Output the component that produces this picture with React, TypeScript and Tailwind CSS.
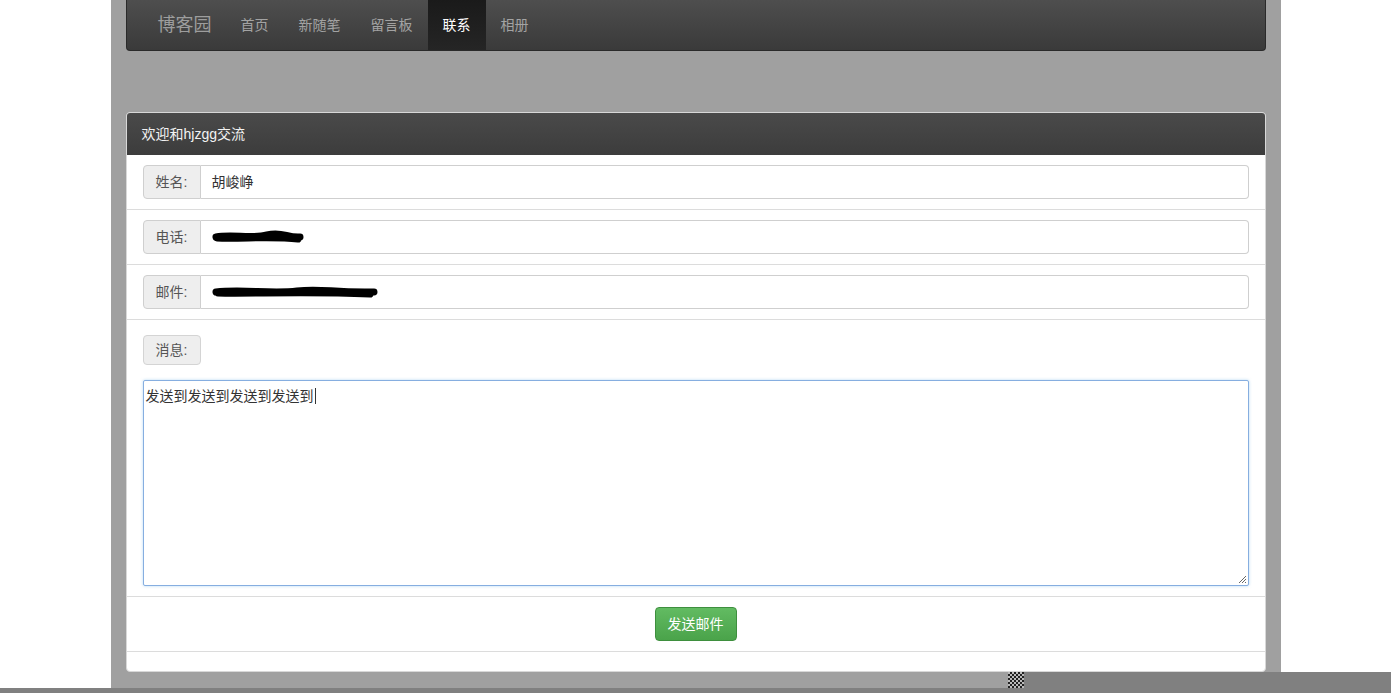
import React from "react";

const font = { fontFamily: '"Liberation Sans", "Noto Sans CJK SC", Arial, sans-serif' };

function Scribble({ width, variant }: { width: number; variant: number }) {
  const d =
    variant === 0
      ? `M4 7 C 20 4, 40 9, 55 5 S 75 8, ${width - 4} 7 M5 8 C 30 9, 60 6, ${width - 6} 9`
      : `M4 7 C 30 4, 60 9, 85 6 S 120 8, ${width - 4} 7 M6 8 C 40 9, 90 6, ${width - 8} 9`;
  return (
    <svg width={width} height={14} viewBox={`0 0 ${width} 14`} className="block">
      <path d={d} stroke="#000" strokeWidth={7} strokeLinecap="round" fill="none" />
    </svg>
  );
}

function Row({ label, children }: { label: string; children: React.ReactNode }) {
  return (
    <div className="border-t border-[#dcdcdc] px-[16px] py-[10px]">
      <div className="flex h-[34px]">
        <div className="flex w-[58px] items-center justify-center rounded-l-[4px] border border-[#cfcfcf] bg-[#eeeeee] text-[14px] text-[#555]">
          {label}
        </div>
        <div className="flex flex-1 items-center rounded-r-[4px] border border-l-0 border-[#cfcfcf] bg-white pl-[11px] text-[14px] text-[#333]">
          {children}
        </div>
      </div>
    </div>
  );
}

export default function App() {
  return (
    <div className="relative h-[693px] w-[1391px] overflow-hidden bg-white" style={font}>
      <div className="mx-auto h-full w-[1170px] bg-[#a0a0a0] px-[15px]">
        {/* navbar */}
        <div className="flex h-[51px] items-stretch rounded-b-[4px] border border-t-0 border-[#2a2a2a] bg-gradient-to-b from-[#4e4e4e] to-[#3a3a3a] pt-[1px]">
          <div className="flex items-center pl-[31px] pr-[13px] text-[18px] text-[#9d9d9d]">博客园</div>
          <div className="w-px" />
          {["首页", "新随笔", "留言板", "联系", "相册"].map((t) => (
            <div
              key={t}
              className={
                t === "联系"
                  ? "-mt-[1px] flex items-center bg-gradient-to-b from-[#1a1a1a] to-[#252525] px-[15px] pt-[1px] text-[14px] text-white"
                  : "flex items-center px-[15px] text-[14px] text-[#a3a3a3]"
              }
            >
              {t}
            </div>
          ))}
        </div>

        {/* panel */}
        <div className="mt-[61px] h-[560px] rounded-[4px] border border-[#d8d8d8] bg-white">
          <div className="flex h-[42px] items-center rounded-t-[3px] bg-gradient-to-b from-[#4a4a4a] to-[#3c3c3c] px-[15px] text-[14px] text-[#f2f2f2]">
            欢迎和hjzgg交流
          </div>
          <div>
            <div className="px-[16px] py-[10px]">
              <div className="flex h-[34px]">
                <div className="flex w-[58px] items-center justify-center rounded-l-[4px] border border-[#cfcfcf] bg-[#eeeeee] text-[14px] text-[#555]">
                  姓名:
                </div>
                <div className="flex flex-1 items-center rounded-r-[4px] border border-l-0 border-[#cfcfcf] bg-white pl-[11px] text-[14px] text-[#333]">
                  胡峻峥
                </div>
              </div>
            </div>
            <Row label="电话:">
              <Scribble width={92} variant={0} />
            </Row>
            <Row label="邮件:">
              <Scribble width={166} variant={1} />
            </Row>
            <div className="border-t border-[#dcdcdc] px-[16px] pb-[10px] pt-[15px]">
              <div className="flex h-[30px] w-[58px] items-center justify-center rounded-[4px] border border-[#d4d4d4] bg-[#eeeeee] text-[14px] text-[#555]">
                消息:
              </div>
              <div className="relative mt-[15px] h-[206px] rounded-[2px] border border-[#86aee0] bg-white px-[2px] pt-[4px] text-[14px] leading-[20px] text-[#333] shadow-[0_0_3px_rgba(102,175,233,0.5)]">
                发送到发送到发送到发送到
                <span className="ml-[1px] inline-block h-[16px] w-px translate-y-[3px] bg-[#333]" />
                <svg className="absolute bottom-[1px] right-[1px]" width="10" height="10" viewBox="0 0 10 10">
                  <path d="M9 2 L2 9 M9 5 L5 9 M9 8 L8 9" stroke="#666" strokeWidth="1" />
                </svg>
              </div>
            </div>
            <div className="flex justify-center border-t border-[#dcdcdc] py-[10px]">
              <div className="flex h-[34px] w-[82px] items-center justify-center rounded-[4px] border border-[#3e8f3e] bg-gradient-to-b from-[#62bb62] to-[#4aa34a] text-[14px] text-white">
                发送邮件
              </div>
            </div>
            <div className="border-t border-[#dcdcdc]" />
          </div>
        </div>
      </div>

      {/* scrollbar artifacts over content */}
      <div className="absolute bottom-0 left-0 h-[5px] w-full bg-[#808080]" />
      <div className="absolute bottom-0 right-0 h-[21px] w-[367px] bg-[#808080]" />
      <div
        className="absolute bottom-[5px] left-[1008px] h-[16px] w-[16px]"
        style={{
          backgroundImage: "repeating-conic-gradient(#222 0% 25%, #bbb 0% 50%)",
          backgroundSize: "4px 4px",
        }}
      />
    </div>
  );
}
